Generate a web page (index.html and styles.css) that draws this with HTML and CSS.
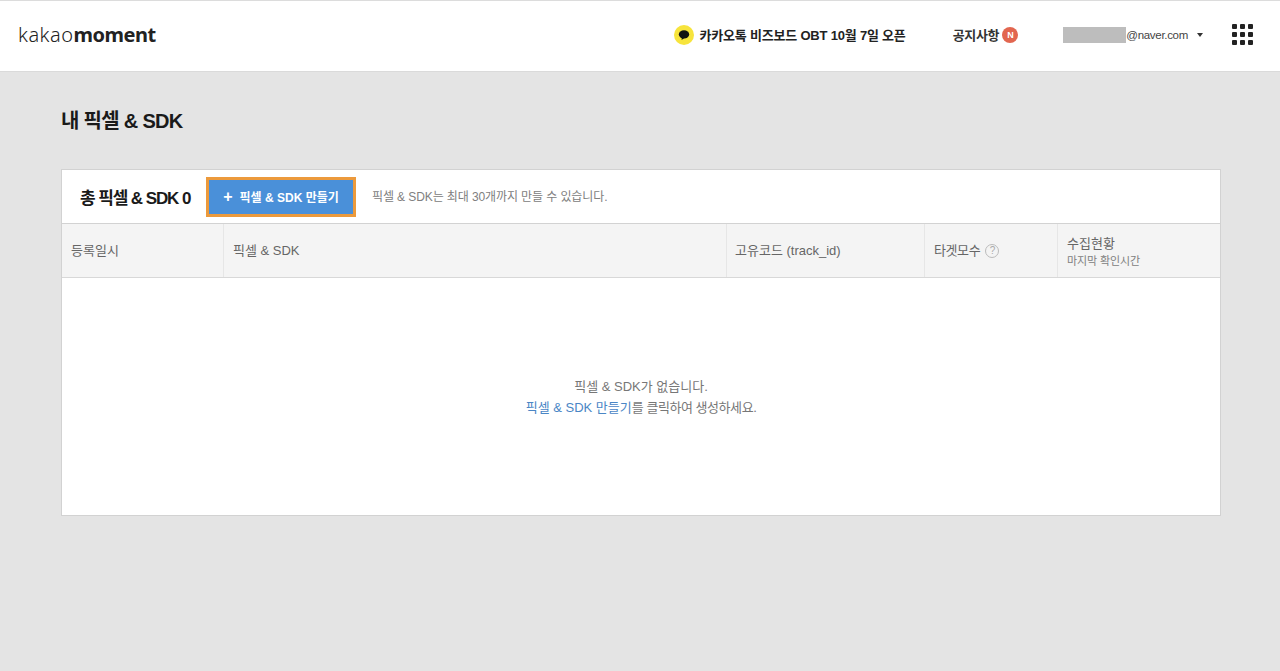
FILE: index.html
```html
<!DOCTYPE html>
<html lang="ko">
<head>
<meta charset="utf-8">
<title>내 픽셀 &amp; SDK</title>
<link rel="stylesheet" href="styles.css">
</head>
<body>
<header class="gnb">
  <div class="logo"><span class="logo-light">kakao</span><span class="logo-bold">moment</span></div>
  <div class="gnb-right">
    <a class="notice-banner">
      <svg class="talk-icon" width="20" height="20" viewBox="0 0 20 20"><circle cx="10" cy="10" r="10" fill="#f7e43c"/><ellipse cx="10" cy="9.4" rx="5.2" ry="4.2" fill="#111"/><path d="M7.8 12.2 L7.6 15 L10.4 13 Z" fill="#111"/></svg>
      <span>카카오톡 비즈보드 OBT 10월 7일 오픈</span>
    </a>
    <a class="notice"><span>공지사항</span><span class="badge">N</span></a>
    <div class="account"><span class="mask"></span><span class="mail">@naver.com</span><span class="caret"></span></div>
    <div class="apps"><i></i><i></i><i></i><i></i><i></i><i></i><i></i><i></i><i></i></div>
  </div>
</header>
<main class="content">
  <h1 class="page-title">내 픽셀 &amp; SDK</h1>
  <section class="panel">
    <div class="panel-top">
      <strong class="total">총 픽셀 &amp; SDK 0</strong>
      <button class="create"><span class="plus">+</span><span>픽셀 &amp; SDK 만들기</span></button>
      <span class="hint">픽셀 &amp; SDK는 최대 30개까지 만들 수 있습니다.</span>
    </div>
    <div class="thead">
      <div class="th c1">등록일시</div>
      <div class="th c2">픽셀 &amp; SDK</div>
      <div class="th c3">고유코드 (track_id)</div>
      <div class="th c4">타겟모수<span class="help">?</span></div>
      <div class="th c5"><span class="th-main">수집현황</span><span class="th-sub">마지막 확인시간</span></div>
    </div>
    <div class="empty">
      <p>픽셀 &amp; SDK가 없습니다.</p>
      <p><a class="link">픽셀 &amp; SDK 만들기</a><span class="tight">를 클릭하여 생성하세요.</span></p>
    </div>
  </section>
</main>
</body>
</html>
```

FILE: styles.css
```css
* { box-sizing: border-box; }
html, body { margin: 0; height: 100%; }
body {
  background: #e4e4e4;
  font-family: "Liberation Sans", "Noto Sans CJK KR", sans-serif;
  color: #333;
  overflow: hidden;
}
.gnb {
  height: 72px;
  background: #fff;
  border-top: 1px solid #dcdcdc;
  border-bottom: 1px solid #dadada;
  display: flex;
  align-items: center;
  justify-content: space-between;
  padding: 0 27px 3px 18px;
}
.logo { font-size: 20px; line-height: 1; color: #222; font-family: "Noto Sans", sans-serif; }
.logo-light { font-weight: 300; letter-spacing: 0.5px; }
.logo-bold { font-weight: 700; letter-spacing: -0.5px; }
.gnb-right { display: flex; align-items: center; }
.notice-banner { display: flex; align-items: center; gap: 6px; font-size: 13px; font-weight: 700; color: #222; letter-spacing: -0.2px; }
.notice { display: flex; align-items: center; gap: 3px; margin-left: 47px; font-size: 13px; font-weight: 700; color: #333; letter-spacing: -0.3px; }
.badge { width: 16px; height: 16px; border-radius: 50%; background: #e2664f; color: #fff; font-size: 9px; font-weight: 700; display: flex; align-items: center; justify-content: center; }
.account { display: flex; align-items: center; margin-left: 45px; }
.mask { width: 63px; height: 16px; background: #bdbdbd; }
.mail { font-size: 11.5px; color: #444; letter-spacing: -0.3px; }
.caret { width: 0; height: 0; margin-left: 9px; border-left: 3.5px solid transparent; border-right: 3.5px solid transparent; border-top: 4px solid #333; }
.apps { display: grid; grid-template-columns: repeat(3, 5px); grid-auto-rows: 5px; gap: 3px; margin-left: 29px; }
.apps i { background: #222; border-radius: 1px; }
.content { padding: 37px 59px 0 61px; }
.page-title { margin: 0 0 36px; font-size: 20px; line-height: 24px; font-weight: 700; color: #1a1a1a; letter-spacing: -0.7px; }
.panel { background: #fff; border: 1px solid #d2d2d2; height: 347px; display: flex; flex-direction: column; }
.panel-top { height: 54px; display: flex; align-items: center; padding-left: 18px; border-bottom: 1px solid #d2d2d2; }
.total { font-size: 17px; font-weight: 700; color: #1a1a1a; letter-spacing: -1.1px; width: 126px; flex: none; }
.create {
  width: 150px; height: 40px; flex: none;
  display: flex; align-items: center; justify-content: center; gap: 7px;
  background: #4a90d9; color: #fff; border: 3px solid #ec9a3c; padding: 0;
  font: 700 12px "Liberation Sans", "Noto Sans CJK KR", sans-serif;
}
.plus { font-size: 16px; line-height: 1; }
.hint { margin-left: 16px; padding-bottom: 2px; font-size: 12px; color: #808080; letter-spacing: -0.1px; }
.thead { height: 54px; flex: none; display: flex; background: #f4f4f4; border-bottom: 1px solid #d8d8d8; font-size: 13px; color: #666; }
.th { display: flex; align-items: center; padding-left: 9px; padding-bottom: 2px; border-right: 1px solid #e6e6e6; }
.c1 { width: 162px; }
.c2 { width: 503px; }
.c3 { width: 198px; padding-left: 8px; }
.c4 { width: 133px; letter-spacing: -0.4px; }
.c5 { flex: 1; border-right: 0; padding-top: 3px; padding-bottom: 0; flex-direction: column; align-items: flex-start; justify-content: center; }
.th-main { line-height: 17px; }
.th-sub { font-size: 11px; line-height: 15px; margin-top: 2px; color: #808080; letter-spacing: -0.1px; }
.help { width: 14px; height: 14px; margin-left: 5px; margin-top: 2px; border: 1px solid #bbb; border-radius: 50%; color: #aaa; font-size: 10px; display: flex; align-items: center; justify-content: center; }
.empty { flex: 1; display: flex; flex-direction: column; align-items: center; justify-content: center; font-size: 13px; line-height: 21px; color: #777; padding-top: 1px; }
.empty p { margin: 0; }
.tight { letter-spacing: -0.45px; }
.link { color: #4a86c5; }
```
